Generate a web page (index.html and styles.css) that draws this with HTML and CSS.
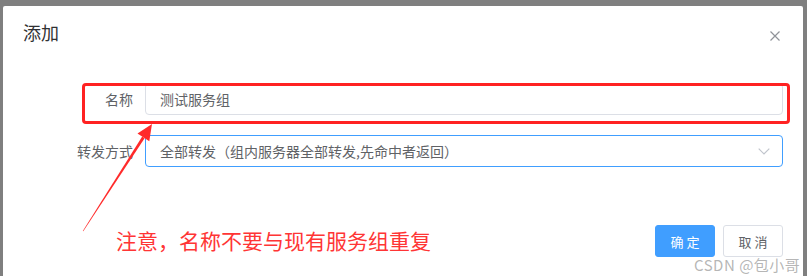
FILE: index.html
```html
<!DOCTYPE html>
<html lang="zh-CN">
<head>
<meta charset="utf-8">
<title>添加</title>
<link rel="stylesheet" href="styles.css">
</head>
<body>
<div class="page">
  <div class="dialog">
    <div class="dialog-header">
      <span class="dialog-title">添加</span>
      <span class="dialog-close">
        <svg width="10" height="10" viewBox="0 0 10 10"><path d="M0.5 0.5 L9.5 9.5 M9.5 0.5 L0.5 9.5" stroke="#909399" stroke-width="1.2" fill="none"/></svg>
      </span>
    </div>
    <div class="dialog-body">
      <div class="form-row">
        <label class="form-label">名称</label>
        <div class="input">测试服务组</div>
      </div>
      <div class="form-row">
        <label class="form-label">转发方式</label>
        <div class="input input-select">
          <span>全部转发（组内服务器全部转发,先命中者返回）</span>
          <svg class="chevron" width="12" height="7" viewBox="0 0 12 7"><path d="M0.7 0.7 L6 6 L11.3 0.7" stroke="#c0c4cc" stroke-width="1.2" fill="none"/></svg>
        </div>
      </div>
    </div>
    <div class="dialog-footer">
      <button class="btn btn-primary">确定</button>
      <button class="btn">取消</button>
    </div>
  </div>

  <div class="mark-rect"></div>
  <svg class="mark-arrow" width="807" height="276" viewBox="0 0 807 276">
    <polygon points="82.8,225 83.3,225.3 144.6,132.2 142.2,130.6" fill="#ff2a2a"/>
    <polygon points="152,118 137.5,127.6 149.3,135.2" fill="#ff2a2a"/>
  </svg>
  <div class="mark-note">注意，名称不要与现有服务组重复</div>
  <div class="watermark">CSDN @包小哥</div>
</div>
</body>
</html>
```

FILE: styles.css
```css
html, body {
  margin: 0;
  padding: 0;
}
body {
  background: #7f7f7f;
  font-family: "Noto Sans CJK SC", "Noto Sans", sans-serif;
  overflow: hidden;
}
.page {
  position: relative;
  width: 807px;
  height: 276px;
}
.dialog {
  margin: 6px 0 0 3px;
  width: 800px;
  height: 270px;
  background: #fff;
  border-radius: 2px 2px 0 0;
  display: flex;
  flex-direction: column;
}
.dialog-header {
  display: flex;
  justify-content: space-between;
  align-items: flex-start;
  padding: 13px 23px 0 20px;
  height: 52px;
  box-sizing: border-box;
}
.dialog-title {
  font-size: 18px;
  line-height: 26px;
  color: #303133;
}
.dialog-close {
  display: flex;
  margin-top: 12px;
}
.dialog-body {
  padding: 25px 20px 0 20px;
  display: flex;
  flex-direction: column;
  gap: 20px;
}
.form-row {
  display: flex;
  align-items: center;
  height: 32px;
}
.form-label {
  width: 122px;
  box-sizing: border-box;
  padding-right: 12px;
  text-align: right;
  font-size: 14px;
  color: #606266;
}
.input {
  width: 638px;
  height: 32px;
  box-sizing: border-box;
  border: 1px solid #dcdfe6;
  border-radius: 4px;
  padding: 0 14px;
  font-size: 14px;
  line-height: 30px;
  color: #606266;
  display: flex;
  align-items: center;
}
.input-select {
  border-color: #409eff;
  justify-content: space-between;
}
.chevron {
  margin-right: -2px;
}
.dialog-footer {
  display: flex;
  justify-content: flex-end;
  gap: 8px;
  padding: 0 20px;
  margin-top: 58px;
}
.btn {
  width: 60px;
  height: 32px;
  border: 1px solid #dcdfe6;
  border-radius: 3px;
  background: #fff;
  color: #606266;
  font-family: "Noto Sans CJK SC", sans-serif;
  font-size: 13px;
  letter-spacing: 3px;
  text-indent: 3px;
  padding: 0;
}
.btn-primary {
  background: #409eff;
  border-color: #409eff;
  color: #fff;
}
.mark-rect {
  position: absolute;
  left: 82px;
  top: 77px;
  width: 702px;
  height: 35px;
  border: 3px solid #ff2222;
  border-radius: 4px;
}
.mark-arrow {
  position: absolute;
  left: 0;
  top: 0;
}
.mark-note {
  position: absolute;
  left: 116px;
  top: 221px;
  font-size: 21px;
  line-height: 26px;
  color: #ff3535;
  white-space: nowrap;
}
.watermark {
  position: absolute;
  left: 694px;
  top: 249px;
  font-size: 15px;
  line-height: 20px;
  letter-spacing: 0.5px;
  color: rgba(150, 150, 150, 0.7);
  white-space: nowrap;
}
```
